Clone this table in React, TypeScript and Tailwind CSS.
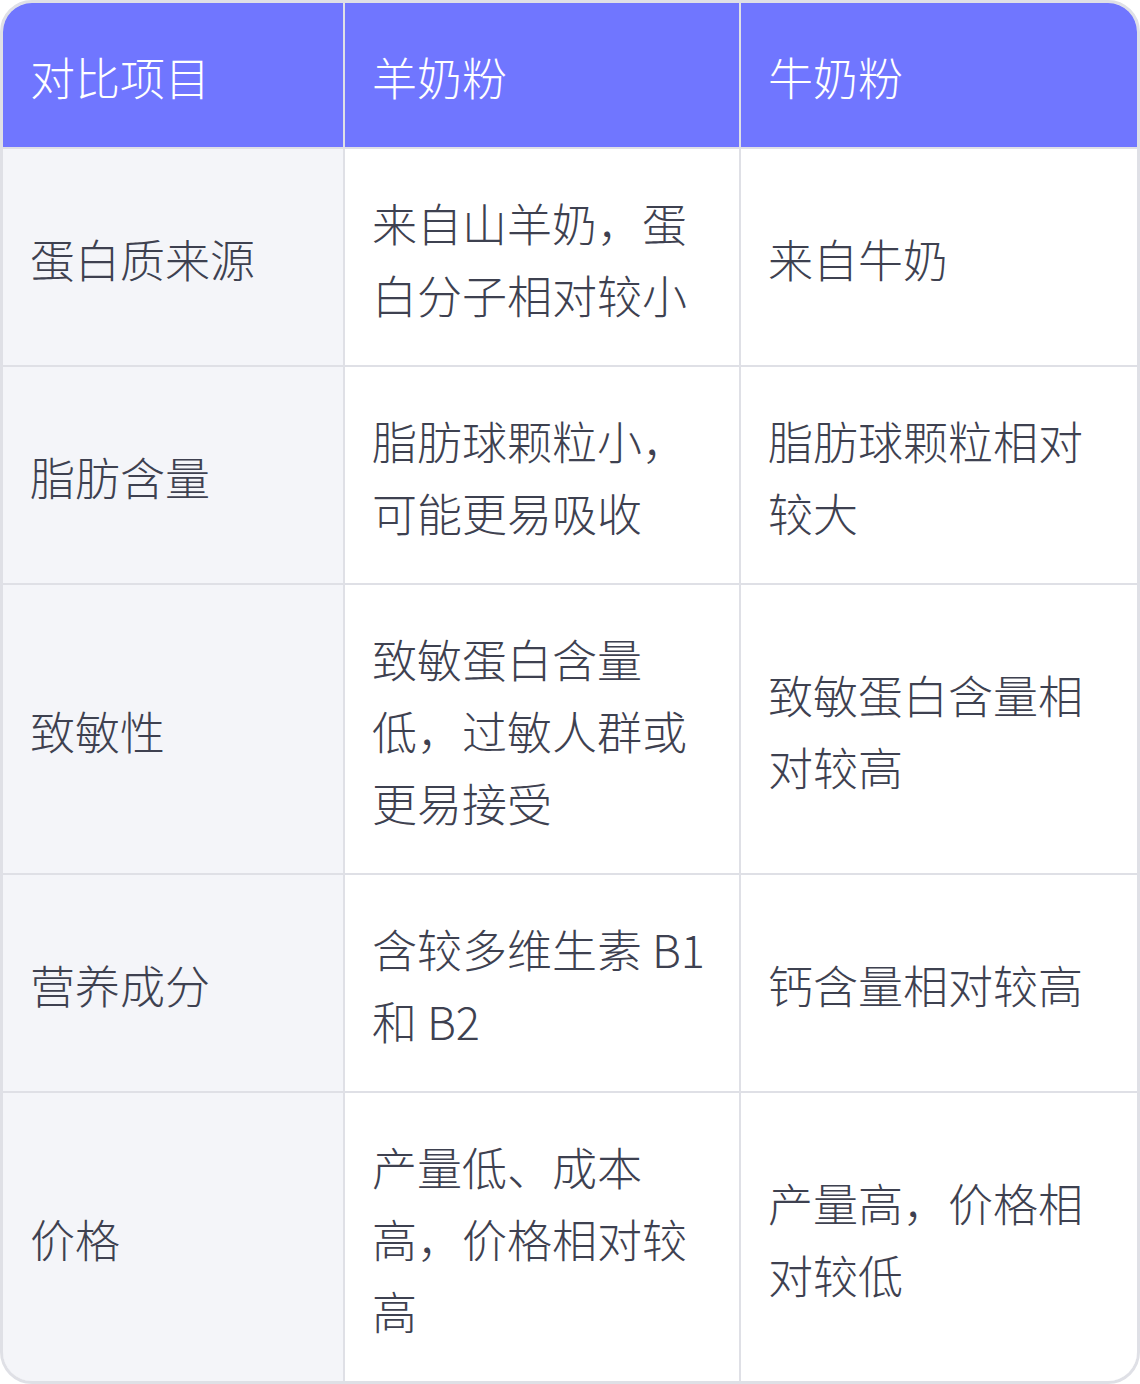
const headers = ["对比项目", "羊奶粉", "牛奶粉"];

const rows = [
  ["蛋白质来源", "来自山羊奶，蛋白分子相对较小", "来自牛奶"],
  ["脂肪含量", "脂肪球颗粒小，可能更易吸收", "脂肪球颗粒相对较大"],
  ["致敏性", "致敏蛋白含量低，过敏人群或更易接受", "致敏蛋白含量相对较高"],
  ["营养成分", "含较多维生素 B1 和 B2", "钙含量相对较高"],
  ["价格", "产量低、成本高，价格相对较高", "产量高，价格相对较低"],
];

export default function App() {
  return (
    <div className="w-[1140px] bg-white">
      <div className="overflow-hidden rounded-[32px] border-[3px] border-[#dfe0e6]">
        <div
          className="grid grid-cols-[340px_394px_396px] gap-[2px] bg-[#dfe0e6] text-[45px] leading-[72px] font-light"
          style={{ fontFamily: '"Noto Sans CJK SC", "Noto Sans", sans-serif' }}
        >
          {headers.map((h) => (
            <div key={h} className="flex items-center bg-[#7076ff] pl-[27px] pr-[12px] pt-[38px] pb-[34px] text-white">
              {h}
            </div>
          ))}
          {rows.map((row) =>
            row.map((cell, i) => (
              <div
                key={row[0] + i}
                className={
                  "flex items-center pl-[27px] pr-[12px] pt-[38px] pb-[34px] text-[#3e4150] " +
                  (i === 0 ? "bg-[#f4f5f9]" : "bg-white")
                }
              >
                <span>{cell}</span>
              </div>
            ))
          )}
        </div>
      </div>
    </div>
  );
}
